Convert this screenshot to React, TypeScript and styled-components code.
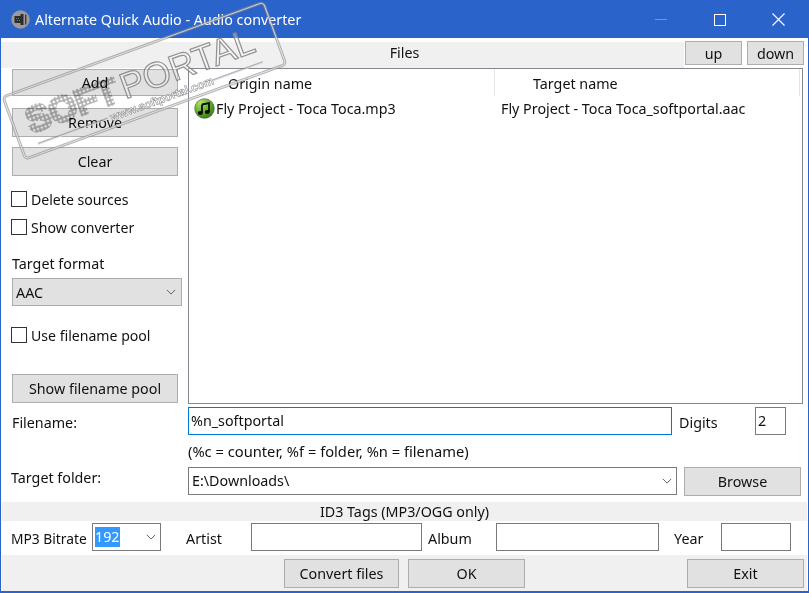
import React from "react";
import styled, { createGlobalStyle } from "styled-components";

const Global = createGlobalStyle`
  html, body { margin: 0; padding: 0; background: #fff; }
  * { box-sizing: border-box; }
`;

const Win = styled.div`
  position: relative;
  width: 809px;
  height: 593px;
  border: 1px solid #2a63c9;
  border-bottom-width: 2px;
  background: #fff;
  font-family: "Noto Sans", "Open Sans", sans-serif;
  font-size: 14.3px;
  color: #111;
  overflow: hidden;
  display: flex;
  flex-direction: column;
`;
const TitleBar = styled.div`
  height: 37px;
  flex: none;
  background: #2a63c9;
  color: #fff;
  display: flex;
  align-items: center;
  padding-left: 10px;
  font-size: 14.3px;
`;
const TitleText = styled.span`
  margin-left: 5px;
  flex: 1;
`;
const WinBtn = styled.div`
  width: 59px;
  height: 37px;
  display: flex;
  align-items: center;
  justify-content: center;
`;
const FilesBar = styled.div`
  height: 30px;
  flex: none;
  display: grid;
  grid-template-columns: 678px 57px 57px;
  column-gap: 5px;
  padding: 3px 0 0 1px;
`;
const FilesLabel = styled.div`
  background: #f0f0f0;
  margin-top: 1px;
  height: 26px;
  text-align: center;
  line-height: 22px;
  padding-left: 124px;
  width: 683px;
  margin-left: -1px;
`;
const Btn = styled.div<{ $w?: number; $h?: number; $ml?: number }>`
  width: ${(p) => (p.$w ? p.$w + "px" : "auto")};
  height: ${(p) => p.$h ?? 29}px;
  margin-left: ${(p) => p.$ml ?? 0}px;
  flex: none;
  background: #e1e1e1;
  border: 1px solid #adadad;
  display: flex;
  align-items: center;
  justify-content: center;
`;
const Main = styled.div`
  display: flex;
  height: 336px;
  flex: none;
`;
const Side = styled.div`
  width: 187px;
  flex: none;
  padding: 1px 0 0 11px;
  display: flex;
  flex-direction: column;
`;
const SideBtn = styled(Btn)<{ $mt?: number }>`
  margin-top: ${(p) => p.$mt ?? 0}px;
`;
const CheckRow = styled.label<{ $mt: number }>`
  display: flex;
  align-items: center;
  gap: 4px;
  margin-top: ${(p) => p.$mt}px;
  margin-left: -1px;
  height: 16px;
  font-size: 14.1px;
`;
const Box = styled.span`
  width: 16px;
  height: 16px;
  border: 1px solid #333;
  background: #fff;
`;
const FormatLabel = styled.div`
  margin-top: 19px;
  line-height: 20px;
`;
const FormatSelect = styled.div`
  margin-top: 4px;
  width: 170px;
  height: 28px;
  background: #e1e1e1;
  border: 1px solid #adadad;
  display: flex;
  align-items: center;
  justify-content: space-between;
  padding: 0 5px 0 3px;
`;
const ListBox = styled.div`
  width: 615px;
  height: 336px;
  border: 1px solid #828790;
  flex: none;
`;
const ListHead = styled.div`
  display: flex;
  height: 27px;
  align-items: center;
  margin-bottom: 1px;
`;
const HeadCell = styled.div<{ $w: number; $pl: number }>`
  width: ${(p) => p.$w}px;
  padding-left: ${(p) => p.$pl}px;
  height: 100%;
  display: flex;
  align-items: center;
  padding-top: 1px;
  border-right: 1px solid #e5e5e5;
`;
const ListRow = styled.div`
  display: flex;
  align-items: center;
  height: 22px;
`;
const NameCell = styled.div`
  width: 305px;
  padding-left: 5px;
  display: flex;
  align-items: center;
  gap: 1px;
`;
const TargetCell = styled.div`
  padding-left: 7px;
`;
const FormRow = styled.div<{ $h: number; $mt?: number }>`
  display: flex;
  align-items: center;
  height: ${(p) => p.$h}px;
  margin-top: ${(p) => p.$mt ?? 0}px;
  flex: none;
`;
const RowLabel = styled.div<{ $w: number; $pl?: number; $top?: number; $bottom?: number; $size?: number }>`
  width: ${(p) => p.$w}px;
  padding-left: ${(p) => p.$pl ?? 0}px;
  padding-top: ${(p) => p.$top ?? 0}px;
  padding-bottom: ${(p) => p.$bottom ?? 0}px;
  font-size: ${(p) => p.$size ?? 14.3}px;
  flex: none;
`;
const Field = styled.div<{ $w: number; $focus?: boolean; $pl?: number }>`
  width: ${(p) => p.$w}px;
  height: 28px;
  flex: none;
  border: 1px solid ${(p) => (p.$focus ? "#0078d7" : "#7a7a7a")};
  background: #fff;
  padding: 0 2px 0 ${(p) => p.$pl ?? 2}px;
  line-height: 24px;
  display: flex;
  align-items: center;
  justify-content: space-between;
`;
const ChevronSlot = styled.span`
  display: flex;
  padding-right: 2px;
`;
const Hint = styled.div`
  height: 32px;
  padding: 6px 0 0 187px;
  line-height: 20px;
  font-size: 14.7px;
  flex: none;
`;
const Strip = styled.div`
  height: 19px;
  margin: 7px 1px 0;
  background: #f0f0f0;
  text-align: center;
  line-height: 20px;
  flex: none;
`;
const Selected = styled.span`
  background: #3399ff;
  color: #fff;
  line-height: 20px;
`;
const FooterBar = styled.div`
  flex: 1;
  margin: 4px 1px 0;
  background: #f0f0f0;
  display: flex;
  padding: 4px 0 0 282px;
`;
const Watermark = styled.svg`
  position: absolute;
  left: -1px;
  top: -1px;
  pointer-events: none;
`;
const DotText = styled.text`
  mix-blend-mode: multiply;
  font-family: "Liberation Sans", sans-serif;
  font-weight: 700;
  font-size: 36px;
`;

const Chevron = () => (
  <svg width="10" height="6" viewBox="0 0 12 7" fill="none" stroke="#555" strokeWidth="1.1">
    <path d="M1 1l5 5 5-5" />
  </svg>
);

const SpeakerIcon = () => (
  <svg width="19" height="19" viewBox="0 0 19 19">
    <circle cx="9.5" cy="9.5" r="9.2" fill="#9b9b9b" />
    <path d="M3.5 6h6V4h3v11h-3v-2h-6z" fill="#2c2c2c" />
    <path d="M14 4.5h1.4v10H14z" fill="#3d3d3d" />
    <path d="M5 8h1v1H5zM7 8h1v1H7zM6 10h1v1H6zM8 10h1v1H8z" fill="#777" />
  </svg>
);

const MusicIcon = () => (
  <svg width="21" height="21" viewBox="0 0 21 21">
    <defs>
      <radialGradient id="mg" cx=".3" cy=".2" r=".95">
        <stop offset="0" stopColor="#b5e06a" />
        <stop offset=".55" stopColor="#5fa82a" />
        <stop offset="1" stopColor="#2c6d12" />
      </radialGradient>
    </defs>
    <circle cx="10.5" cy="10.5" r="9.8" fill="url(#mg)" stroke="#4d6a3c" strokeWidth=".7" />
    <path d="M8 6.5l7-1.5v9M8 6.5V15" fill="none" stroke="#0c0c0c" strokeWidth="1.8" />
    <ellipse cx="6.3" cy="15" rx="2.5" ry="1.9" fill="#0c0c0c" />
    <ellipse cx="13.3" cy="14" rx="2.5" ry="1.9" fill="#0c0c0c" />
  </svg>
);

export default function App() {
  return (
    <Win>
      <Global />
      <TitleBar>
        <SpeakerIcon />
        <TitleText>Alternate Quick Audio - Audio converter</TitleText>
        <WinBtn>
          <svg width="12" height="1"><rect width="12" height="1" fill="#6f95dc" /></svg>
        </WinBtn>
        <WinBtn>
          <svg width="12" height="12" fill="none" stroke="#fff"><rect x=".5" y=".5" width="11" height="11" /></svg>
        </WinBtn>
        <WinBtn>
          <svg width="13" height="13" fill="none" stroke="#fff" strokeWidth="1.1"><path d="M.5.5l12 12M12.5.5l-12 12" /></svg>
        </WinBtn>
      </TitleBar>
      <FilesBar>
        <FilesLabel>Files</FilesLabel>
        <Btn $h={24}>up</Btn>
        <Btn $h={24}>down</Btn>
      </FilesBar>
      <Main>
        <Side>
          <SideBtn $w={166} $h={27}>Add</SideBtn>
          <SideBtn $w={166} $mt={12}>Remove</SideBtn>
          <SideBtn $w={166} $mt={10}>Clear</SideBtn>
          <CheckRow $mt={15}><Box />Delete sources</CheckRow>
          <CheckRow $mt={12}><Box />Show converter</CheckRow>
          <FormatLabel>Target format</FormatLabel>
          <FormatSelect>AAC<Chevron /></FormatSelect>
          <CheckRow $mt={21}><Box />Use filename pool</CheckRow>
          <SideBtn $w={166} $mt={31}>Show filename pool</SideBtn>
        </Side>
        <ListBox>
          <ListHead>
            <HeadCell $w={306} $pl={39}>Origin name</HeadCell>
            <HeadCell $w={305} $pl={38}>Target name</HeadCell>
          </ListHead>
          <ListRow>
            <NameCell><MusicIcon />Fly Project - Toca Toca.mp3</NameCell>
            <TargetCell>Fly Project - Toca Toca_softportal.aac</TargetCell>
          </ListRow>
        </ListBox>
      </Main>
      <FormRow $h={28} $mt={3}>
        <RowLabel $w={187} $pl={11} $top={3}>Filename:</RowLabel>
        <Field $w={484} $focus>%n_softportal</Field>
        <RowLabel $w={83} $pl={7} $top={3}>Digits</RowLabel>
        <Field $w={31}>2</Field>
      </FormRow>
      <Hint>(%c = counter, %f = folder, %n = filename)</Hint>
      <FormRow $h={28}>
        <RowLabel $w={187} $pl={10} $bottom={7}>Target folder:</RowLabel>
        <Field $w={489} $pl={3}>E:\Downloads\<ChevronSlot><Chevron /></ChevronSlot></Field>
        <Btn $w={117} $h={29} $ml={7}>Browse</Btn>
      </FormRow>
      <Strip>ID3 Tags (MP3/OGG only)</Strip>
      <FormRow $h={28} $mt={2}>
        <RowLabel $w={91} $pl={10} $top={3} $size={13.8}>MP3 Bitrate</RowLabel>
        <Field $w={69}><Selected>192</Selected><ChevronSlot><Chevron /></ChevronSlot></Field>
        <RowLabel $w={90} $pl={25} $top={3}>Artist</RowLabel>
        <Field $w={171} />
        <RowLabel $w={74} $pl={6} $top={3}>Album</RowLabel>
        <Field $w={163} />
        <RowLabel $w={62} $pl={15} $top={3}>Year</RowLabel>
        <Field $w={70} />
      </FormRow>
      <FooterBar>
        <Btn $w={115}>Convert files</Btn>
        <Btn $w={117} $ml={9}>OK</Btn>
        <Btn $w={117} $ml={162}>Exit</Btn>
      </FooterBar>
      <Watermark width="809" height="593" viewBox="0 0 809 593">
        <defs>
          <pattern id="dots" width="4" height="4" patternUnits="userSpaceOnUse">
            <rect width="4" height="4" fill="#b0b0b0" />
            <rect x=".9" y=".9" width="2.2" height="2.2" fill="#fff" />
          </pattern>
        </defs>
        <g transform="translate(3 97) rotate(-20)">
          <rect x="0" y="0" width="277" height="66" rx="4" fill="none" stroke="#8c8c8c" strokeOpacity=".65" strokeWidth="3" />
          <rect x="0" y="0" width="277" height="66" rx="4" fill="none" stroke="#fff" strokeOpacity=".65" strokeWidth="1" />
          <DotText x="14" y="44" fill="url(#dots)" stroke="url(#dots)" strokeWidth="3">SOFT</DotText>
          <text x="114" y="44" fontFamily="'Liberation Sans', sans-serif" fontSize="36" fill="#fff" fillOpacity=".35" stroke="#808080" strokeOpacity=".85" strokeWidth="1.2">PORTAL</text>
          <text x="94" y="60" fontFamily="'Liberation Sans', sans-serif" fontWeight="700" fontSize="11.5" fill="#fff" fillOpacity=".85" stroke="#808080" strokeOpacity=".85" strokeWidth=".6">www.softportal.com</text>
          <path d="M17 56h74M203 56h53" stroke="#8c8c8c" strokeOpacity=".65" strokeWidth="2" />
          <path d="M17 56.7h74M203 56.7h53" stroke="#fff" strokeOpacity=".7" strokeWidth=".8" />
        </g>
      </Watermark>
    </Win>
  );
}
